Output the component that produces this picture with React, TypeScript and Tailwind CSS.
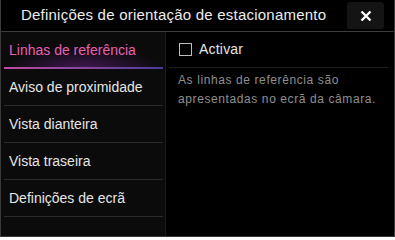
import React from "react"

const items = ["Linhas de referência", "Aviso de proximidade", "Vista dianteira", "Vista traseira", "Definições de ecrã"]

const App = () => {
  return (
    <div
      className="w-[395px] h-[237px] bg-black flex flex-col border-x border-b border-[#3a3a3a] overflow-hidden"
      style={{ fontFamily: '"Liberation Sans", Arial, sans-serif' }}>
      {/* header */}
      <div className="h-[32px] flex items-center border-b border-[#3c3c3c] shrink-0">
        <p className="pl-[20px] text-[15px] text-[#ececec] tracking-[0.22px]">Definições de orientação de estacionamento</p>
        <button className="ml-auto mr-[10px] w-[37px] h-[27px] rounded-[3px] bg-[#141414] flex items-center justify-center">
          <svg width="12" height="12" viewBox="0 0 12 12">
            <path d="M1.5 1.5 L10.5 10.5 M10.5 1.5 L1.5 10.5" stroke="#fff" strokeWidth="2.4" />
          </svg>
        </button>
      </div>
      <div className="flex flex-1">
        {/* menu */}
        <div className="w-[165px] bg-[#0b0b0b] border-r border-[#1c1c1c] flex flex-col">
          {items.map((item, i) => (
            <div key={item} className="relative h-[37px] flex items-center px-[3px]">
              {i === 0 && (
                <div className="absolute inset-x-[3px] bottom-0 h-[22px] bg-[radial-gradient(ellipse_at_bottom,rgba(130,40,170,0.45),transparent_70%)]" />
              )}
              <p className={`relative pl-[5px] text-[14px] ${i === 0 ? "text-[#e860b4]" : "text-[#e6e6e6]"}`}>{item}</p>
              <div
                className={`absolute left-[3px] right-[2px] bottom-0 ${
                  i === 0 ? "h-[2px] bg-gradient-to-r from-[#c04aa0] to-[#4a3a9a]" : "h-[1.5px] bg-[#2a2a2a]"
                }`}
              />
            </div>
          ))}
        </div>
        {/* content */}
        <div className="flex-1 flex flex-col pl-[3px] pr-[6px]">
          <div className="h-[36px] flex items-center gap-[7px] pl-[10px] border-b border-[#1e1e1e]">
            <div className="w-[13px] h-[13px] border-[1.5px] border-[#bdbdbd]" />
            <p className="text-[14px] text-[#e6e6e6] tracking-[0.2px]">Activar</p>
          </div>
          <div className="pl-[9px] pt-[3px] text-[12px] leading-[19px] tracking-[0.6px] text-[#8f8f8f] whitespace-nowrap">
            <p>As linhas de referência são</p>
            <p>apresentadas no ecrã da câmara.</p>
          </div>
        </div>
      </div>
    </div>
  )
}

export default App
